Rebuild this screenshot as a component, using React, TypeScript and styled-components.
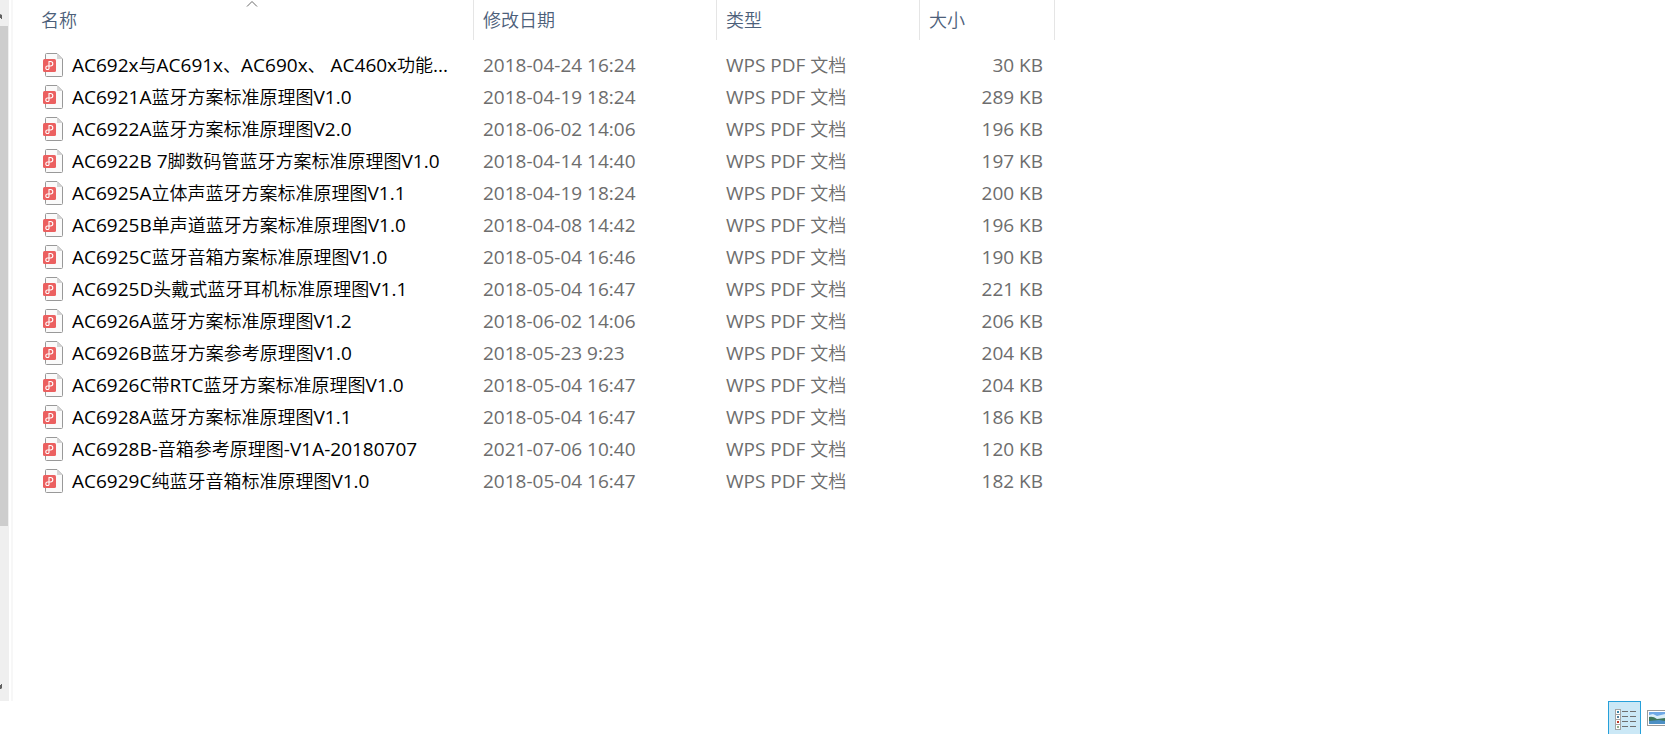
import React from 'react';
import styled, { createGlobalStyle } from 'styled-components';

const GlobalStyle = createGlobalStyle`
  * { box-sizing: border-box; }
  body {
    margin: 0;
    background: #fff;
    font-family: "Open Sans", "Noto Sans CJK SC", sans-serif;
    font-size: 18px;
    font-weight: 350;
  }
`;

const Window = styled.div`
  display: flex;
  flex-direction: column;
  height: 100vh;
  min-height: 560px;
  overflow: hidden;
`;

const Content = styled.main`
  display: flex;
  flex: 1;
  min-height: 0;
`;

const ScrollTrack = styled.div`
  display: flex;
  flex-direction: column;
  flex: none;
  width: 9px;
  background: #efefef;
`;

const ScrollButton = styled.button`
  display: flex;
  flex: none;
  width: 9px;
  height: 26px;
  padding: 0;
  border: 0;
  background: transparent;
`;

const ScrollGutter = styled.div`
  flex: 1;
  min-height: 0;
`;

const ScrollThumb = styled.div`
  width: 8px;
  height: 77%;
  background: #cdcdcd;
`;

const Splitter = styled.div`
  flex: none;
  width: 4px;
  border-left: 2px solid #fff;
  border-right: 2px solid #f7f7f7;
`;

const ListPane = styled.section`
  flex: 1;
  min-width: 0;
  overflow: hidden;
`;

const FileTable = styled.table`
  width: 1042px;
  table-layout: fixed;
  border-collapse: separate;
  border-spacing: 0;
`;

const Column = styled.col<{ $width: number }>`
  width: ${({ $width }) => $width}px;
`;

const HeadCell = styled.th`
  padding: 0;
  height: 40px;
  border-right: 1px solid #e5e5e5;
  font-weight: inherit;
`;

const HeadButton = styled.button<{ $indent: number }>`
  position: relative;
  display: block;
  width: 100%;
  height: 40px;
  padding: 0 0 0 ${({ $indent }) => $indent}px;
  border: 0;
  background: transparent;
  color: #4c607a;
  font: inherit;
  line-height: 40px;
  text-align: left;
`;

const SortMark = styled.svg`
  position: absolute;
  top: 0;
  left: 50%;
  width: 12px;
  height: 8px;
  margin-left: 3px;
`;

const Rows = styled.tbody`
  &::before {
    content: '';
    display: block;
    height: 9px;
  }
`;

const Cell = styled.td<{ $align?: 'right' }>`
  height: 32px;
  padding: ${({ $align }) => ($align ? '0 12px 0 0' : '0 0 0 9px')};
  color: #6d6d6d;
  line-height: 32px;
  text-align: ${({ $align }) => $align ?? 'left'};
  white-space: nowrap;
`;

const NameCell = styled(Cell)`
  padding-left: 30px;
  color: #000;
`;

const FileName = styled.div`
  display: flex;
  align-items: center;
  gap: 8px;
  height: 32px;
`;

const Latin = styled.span`
  font-size: 19px;
  font-weight: 400;
  line-height: 1;
`;

const StatusBar = styled.footer`
  display: flex;
  flex: none;
  justify-content: flex-end;
  height: 33px;
  overflow: hidden;
`;

const ViewButton = styled.button<{ $active?: boolean; $width: number }>`
  display: flex;
  flex: none;
  width: ${({ $width }) => $width}px;
  height: 35px;
  padding: 0;
  overflow: hidden;
  border: ${({ $active }) => ($active ? '1px solid #26a0da' : '0')};
  background: ${({ $active }) => ($active ? '#cbe8f6' : 'transparent')};
`;

const files = [
  ['AC692x与AC691x、AC690x、 AC460x功能...', '2018-04-24 16:24', '30 KB'],
  ['AC6921A蓝牙方案标准原理图V1.0', '2018-04-19 18:24', '289 KB'],
  ['AC6922A蓝牙方案标准原理图V2.0', '2018-06-02 14:06', '196 KB'],
  ['AC6922B 7脚数码管蓝牙方案标准原理图V1.0', '2018-04-14 14:40', '197 KB'],
  ['AC6925A立体声蓝牙方案标准原理图V1.1', '2018-04-19 18:24', '200 KB'],
  ['AC6925B单声道蓝牙方案标准原理图V1.0', '2018-04-08 14:42', '196 KB'],
  ['AC6925C蓝牙音箱方案标准原理图V1.0', '2018-05-04 16:46', '190 KB'],
  ['AC6925D头戴式蓝牙耳机标准原理图V1.1', '2018-05-04 16:47', '221 KB'],
  ['AC6926A蓝牙方案标准原理图V1.2', '2018-06-02 14:06', '206 KB'],
  ['AC6926B蓝牙方案参考原理图V1.0', '2018-05-23 9:23', '204 KB'],
  ['AC6926C带RTC蓝牙方案标准原理图V1.0', '2018-05-04 16:47', '204 KB'],
  ['AC6928A蓝牙方案标准原理图V1.1', '2018-05-04 16:47', '186 KB'],
  ['AC6928B-音箱参考原理图-V1A-20180707', '2021-07-06 10:40', '120 KB'],
  ['AC6929C纯蓝牙音箱标准原理图V1.0', '2018-05-04 16:47', '182 KB'],
];

/* Sets Latin runs one size above the Chinese text so both look equally large. */
function MixedText({ text }: { text: string }) {
  const runs = text.match(/[\x20-\x7e]+|[^\x20-\x7e]+/g) ?? [];
  return (
    <span>
      {runs.map((run, i) =>
        run.charCodeAt(0) < 128 ? <Latin key={i}>{run}</Latin> : <span key={i}>{run}</span>
      )}
    </span>
  );
}

function PdfIcon() {
  return (
    <svg width="21" height="24" viewBox="0 0 21 24" aria-hidden="true">
      <path d="M3.5 .5H14L19.5 6V22.5Q19.5 23.5 18.5 23.5H3.5Q2.5 23.5 2.5 22.5V1.5Q2.5 .5 3.5 .5Z" fill="#fafafa" stroke="#999" />
      <path d="M14 1V6H19Z" fill="#d5d5d5" />
      <rect x="0" y="6" width="13" height="13" rx="1.5" fill="#eb6060" />
      <path
        d="M5.5 8.5H7.5Q9.8 8.5 9.8 10.7T7.5 13H4.5Q2.8 13 2.8 14.8T4.5 16.5 6 14.8V8.5"
        fill="none"
        stroke="#fff"
        strokeWidth="1.1"
      />
    </svg>
  );
}

function DetailsIcon() {
  const rows = [
    [9, '#3b86a8'],
    [14, '#4f7f9c'],
    [19, '#c0392b'],
    [24, '#8fae8c'],
  ] as const;
  return (
    <svg width="31" height="33" viewBox="0 0 31 33" aria-hidden="true">
      <path d="M6 7H12V28H6Z" fill="#a3a3a3" />
      {rows.map(([y, color]) => (
        <g key={y}>
          <rect x="7" y={y - 1} width="4" height="4" fill="#fff" />
          <rect x="8" y={y} width="2" height="2" fill={color} />
          <path d={`M13 ${y + 0.5}H19M21 ${y + 0.5}H27`} stroke="#6f6f6f" />
        </g>
      ))}
    </svg>
  );
}

function PictureIcon() {
  return (
    <svg width="24" height="33" viewBox="0 0 24 33" aria-hidden="true">
      <rect x="6.5" y="9.5" width="20" height="15" fill="#fff" stroke="#9b9b9b" />
      <rect x="8" y="11" width="17" height="12" fill="#6fa8e6" />
      <path d="M8 14L12 13 16 15 24 13V19H8Z" fill="#d9edf8" />
      <path d="M8 16Q12 15 16 18L24 17V20H8Z" fill="#3f765b" />
      <path d="M8 20L18 19 24 20V23H8Z" fill="#4c8fc4" />
    </svg>
  );
}

export default function App() {
  return (
    <Window>
      <GlobalStyle />
      <Content>
        <ScrollTrack>
          <ScrollButton aria-label="Scroll up">
            <svg width="9" height="26" aria-hidden="true">
              <path d="M0 14L2 15V19H1V18H0Z" fill="#606060" />
            </svg>
          </ScrollButton>
          <ScrollGutter>
            <ScrollThumb />
          </ScrollGutter>
          <ScrollButton aria-label="Scroll down">
            <svg width="9" height="26" aria-hidden="true">
              <path d="M2 9V13L1 14H0V10H1V9Z" fill="#606060" />
            </svg>
          </ScrollButton>
        </ScrollTrack>
        <Splitter />
        <ListPane>
          <FileTable>
            <colgroup>
              <Column $width={461} />
              <Column $width={243} />
              <Column $width={203} />
              <Column $width={135} />
            </colgroup>
            <thead>
              <tr>
                <HeadCell scope="col" aria-sort="ascending">
                  <HeadButton $indent={28}>
                    名称
                    <SortMark viewBox="0 0 12 8" aria-hidden="true">
                      <path d="M1 6.5L6 1.5L11 6.5" fill="none" stroke="#6a6a6a" />
                    </SortMark>
                  </HeadButton>
                </HeadCell>
                <HeadCell scope="col">
                  <HeadButton $indent={9}>修改日期</HeadButton>
                </HeadCell>
                <HeadCell scope="col">
                  <HeadButton $indent={9}>类型</HeadButton>
                </HeadCell>
                <HeadCell scope="col">
                  <HeadButton $indent={9}>大小</HeadButton>
                </HeadCell>
              </tr>
            </thead>
            <Rows>
              {files.map(([name, date, size]) => (
                <tr key={name}>
                  <NameCell>
                    <FileName>
                      <PdfIcon />
                      <MixedText text={name} />
                    </FileName>
                  </NameCell>
                  <Cell>
                    <MixedText text={date} />
                  </Cell>
                  <Cell>
                    <MixedText text="WPS PDF 文档" />
                  </Cell>
                  <Cell $align="right">
                    <MixedText text={size} />
                  </Cell>
                </tr>
              ))}
            </Rows>
          </FileTable>
        </ListPane>
      </Content>
      <StatusBar>
        <ViewButton $active $width={33} aria-label="Details view">
          <DetailsIcon />
        </ViewButton>
        <ViewButton $width={24} aria-label="Large icons view">
          <PictureIcon />
        </ViewButton>
      </StatusBar>
    </Window>
  );
}
